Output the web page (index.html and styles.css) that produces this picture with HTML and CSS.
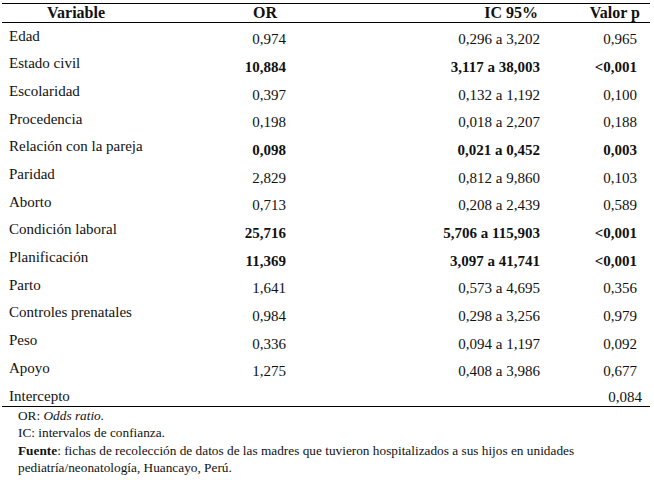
FILE: index.html
```html
<!DOCTYPE html>
<html lang="es">
<head>
<meta charset="utf-8">
<link rel="stylesheet" href="styles.css">
</head>
<body>
<div class="wrap">
<table class="tbl">
  <colgroup>
    <col class="c1"><col class="c2"><col class="c3"><col class="c4">
  </colgroup>
  <thead>
    <tr>
      <th class="h-var">Variable</th>
      <th class="h-or">OR</th>
      <th class="h-ic">IC 95%</th>
      <th class="h-p">Valor p</th>
    </tr>
  </thead>
  <tbody>
    <tr><td class="lab">Edad</td><td class="num">0,974</td><td class="num">0,296 a 3,202</td><td class="num p">0,965</td></tr>
    <tr class="sig"><td class="lab">Estado civil</td><td class="num">10,884</td><td class="num">3,117 a 38,003</td><td class="num p">&lt;0,001</td></tr>
    <tr><td class="lab">Escolaridad</td><td class="num">0,397</td><td class="num">0,132 a 1,192</td><td class="num p">0,100</td></tr>
    <tr><td class="lab">Procedencia</td><td class="num">0,198</td><td class="num">0,018 a 2,207</td><td class="num p">0,188</td></tr>
    <tr class="sig"><td class="lab">Relación con la pareja</td><td class="num">0,098</td><td class="num">0,021 a 0,452</td><td class="num p">0,003</td></tr>
    <tr><td class="lab">Paridad</td><td class="num">2,829</td><td class="num">0,812 a 9,860</td><td class="num p">0,103</td></tr>
    <tr><td class="lab">Aborto</td><td class="num">0,713</td><td class="num">0,208 a 2,439</td><td class="num p">0,589</td></tr>
    <tr class="sig"><td class="lab">Condición laboral</td><td class="num">25,716</td><td class="num">5,706 a 115,903</td><td class="num p">&lt;0,001</td></tr>
    <tr class="sig"><td class="lab">Planificación</td><td class="num">11,369</td><td class="num">3,097 a 41,741</td><td class="num p">&lt;0,001</td></tr>
    <tr><td class="lab">Parto</td><td class="num">1,641</td><td class="num">0,573 a 4,695</td><td class="num p">0,356</td></tr>
    <tr><td class="lab">Controles prenatales</td><td class="num">0,984</td><td class="num">0,298 a 3,256</td><td class="num p">0,979</td></tr>
    <tr><td class="lab">Peso</td><td class="num">0,336</td><td class="num">0,094 a 1,197</td><td class="num p">0,092</td></tr>
    <tr><td class="lab">Apoyo</td><td class="num">1,275</td><td class="num">0,408 a 3,986</td><td class="num p">0,677</td></tr>
    <tr class="last"><td class="lab">Intercepto</td><td class="num"></td><td class="num"></td><td class="num p-last">0,084</td></tr>
  </tbody>
</table>
<div class="notes">
  <p>OR: <em>Odds ratio.</em></p>
  <p>IC: intervalos de confianza.</p>
  <p><strong>Fuente</strong>: fichas de recolección de datos de las madres que tuvieron hospitalizados a sus hijos en unidades<br>pediatría/neonatología, Huancayo, Perú.</p>
</div>
</div>
</body>
</html>
```
FILE: styles.css
```css
html, body {
  margin: 0;
  padding: 0;
  background: #fff;
}
body {
  font-family: "Liberation Serif", "DejaVu Serif", serif;
  color: #111;
}
.wrap {
  padding: 3px 4px 0 2px;
}
.tbl {
  width: 648px;
  border-collapse: collapse;
  table-layout: fixed;
  font-size: 15px;
}
.c1 { width: 148px; }
.c2 { width: 136px; }
.c3 { width: 254px; }
.c4 { width: 110px; }
.tbl thead tr {
  border-top: 1px solid #000;
  border-bottom: 1px solid #000;
}
.tbl th {
  height: 18px;
  padding: 0;
  font-size: 16px;
  line-height: 16px;
  font-weight: bold;
  vertical-align: middle;
}
.h-var { text-align: center; }
.h-or { text-align: right; padding-right: 9px !important; }
.h-ic { text-align: right; padding-right: 2px !important; }
.h-p { text-align: right; padding-right: 10px !important; }
.tbl tbody tr {
  height: 27.7px;
}
.tbl td {
  padding: 0;
  line-height: 16px;
}
.lab {
  vertical-align: top;
  padding: 5px 0 0 7px !important;
  text-align: left;
}
.num {
  vertical-align: bottom;
  text-align: right;
  padding-bottom: 3px !important;
}
.p { padding-right: 13px !important; }
.sig .num {
  font-weight: bold;
}
.tbl tbody tr.last {
  height: 24px;
  border-bottom: 1px solid #000;
}
.last .lab { padding-top: 6px !important; }
.p-last {
  vertical-align: bottom;
  padding: 0 8px 1px 0 !important;
}
.notes {
  padding: 0 0 0 16px;
  font-size: 13.3px;
  line-height: 17.5px;
}
.notes p { margin: 0; }
```
